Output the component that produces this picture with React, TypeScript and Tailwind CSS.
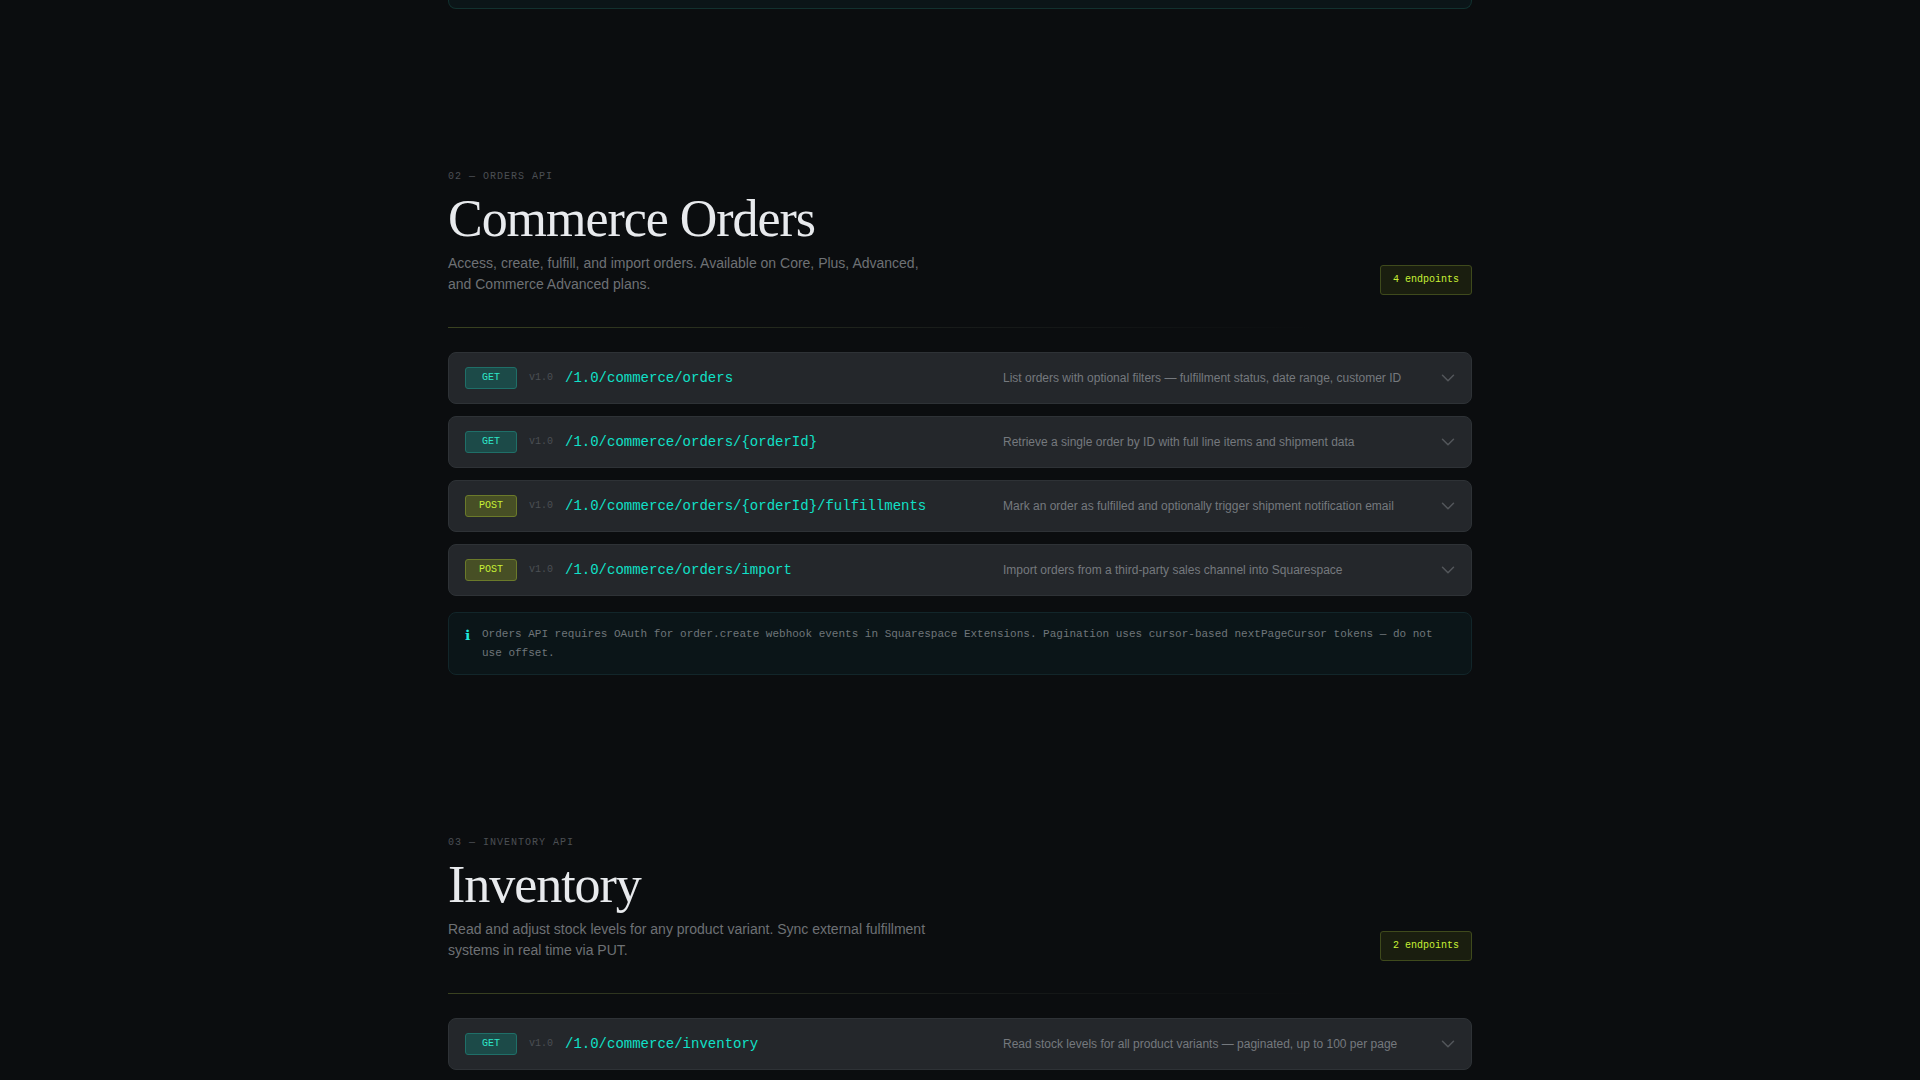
type Endpoint = {
  method: "GET" | "POST";
  path: string;
  desc: string;
};

const orders: Endpoint[] = [
  {
    method: "GET",
    path: "/1.0/commerce/orders",
    desc: "List orders with optional filters — fulfillment status, date range, customer ID",
  },
  {
    method: "GET",
    path: "/1.0/commerce/orders/{orderId}",
    desc: "Retrieve a single order by ID with full line items and shipment data",
  },
  {
    method: "POST",
    path: "/1.0/commerce/orders/{orderId}/fulfillments",
    desc: "Mark an order as fulfilled and optionally trigger shipment notification email",
  },
  {
    method: "POST",
    path: "/1.0/commerce/orders/import",
    desc: "Import orders from a third-party sales channel into Squarespace",
  },
];

const inventory: Endpoint[] = [
  {
    method: "GET",
    path: "/1.0/commerce/inventory",
    desc: "Read stock levels for all product variants — paginated, up to 100 per page",
  },
];

function EndpointRow({ method, path, desc }: Endpoint) {
  return (
    <div className="flex h-[52px] items-center rounded-lg border border-[#2e3236] bg-[#24272b] px-4">
      <span
        className={
          method === "GET"
            ? "flex h-[22px] w-[52px] shrink-0 items-center justify-center rounded-[3px] border border-[#1f6f68] bg-[#1c4a48] pb-[2px] font-['Liberation_Mono',monospace] text-[10px] text-[#2ee6c8]"
            : "flex h-[22px] w-[52px] shrink-0 items-center justify-center rounded-[3px] border border-[#6b7a2a] bg-[#474f25] pb-[2px] font-['Liberation_Mono',monospace] text-[10px] text-[#c8f135]"
        }
      >
        {method}
      </span>
      <span className="ml-3 w-[36px] shrink-0 pb-[2px] font-['Liberation_Mono',monospace] text-[10px] text-[#4b4f54]">
        v1.0
      </span>
      <span className="w-[438px] shrink-0 font-['Liberation_Mono',monospace] text-sm text-[#10e0c8]">
        {path}
      </span>
      <span className="flex-1 font-['Liberation_Sans',sans-serif] text-xs text-[#75797e]">
        {desc}
      </span>
      <svg width="14" height="8" viewBox="0 0 14 8" fill="none" className="shrink-0 text-[#53575b]">
        <path
          d="M1.5 1.25l5.5 5.5 5.5-5.5"
          stroke="currentColor"
          strokeWidth="1.5"
          strokeLinecap="round"
          strokeLinejoin="round"
        />
      </svg>
    </div>
  );
}

function SectionHeader({
  label,
  title,
  lines,
  count,
}: {
  label: string;
  title: string;
  lines: string[];
  count: string;
}) {
  return (
    <div className="relative pb-8">
      <div className="font-['Liberation_Mono',monospace] text-[10px] leading-[15px] tracking-[0.1em] text-[#4b4f54]">
        {label}
      </div>
      <div className="mt-[6px] flex items-end justify-between">
        <div>
          <h2 className="font-['Liberation_Serif',serif] text-[52px] leading-[57px] font-normal tracking-[-0.02em] text-[#e8eaed]">
            {title}
          </h2>
          <p className="mt-[6px] mb-[1px] font-['Liberation_Sans',sans-serif] text-sm leading-[21px] text-[#6e7175]">
            {lines[0]}
            <br />
            {lines[1]}
          </p>
        </div>
        <span className="mb-[1px] flex h-[30px] items-center rounded-[3px] border border-[#3f4a1c] bg-[#1a1e0f] px-3 pb-px font-['Liberation_Mono',monospace] text-[10px] font-normal text-[#c8f135]">
          {count}
        </span>
      </div>
      <div className="absolute right-0 bottom-0 left-0 h-px bg-gradient-to-r from-[#3a4220] via-[#181b1a] to-transparent to-85%" />
    </div>
  );
}

export default function App() {
  return (
    <main className="h-screen overflow-hidden bg-[#0b0d0f]">
      <div className="mx-auto w-[1024px]">
        <div className="h-[9px] rounded-b-lg border-x border-b border-[#12312f] bg-[#0b1518]" />

        <section className="pt-[160px]">
          <SectionHeader
            label="02 — ORDERS API"
            title="Commerce Orders"
            lines={[
              "Access, create, fulfill, and import orders. Available on Core, Plus, Advanced,",
              "and Commerce Advanced plans.",
            ]}
            count="4 endpoints"
          />
          <div className="mt-6 flex flex-col gap-3">
            {orders.map((e) => (
              <EndpointRow key={e.path} {...e} />
            ))}
          </div>
          <div className="mt-4 flex h-[63px] rounded-lg border border-[#12262a] bg-[#0b1518] px-4 pt-3">
            <span className="w-[17px] shrink-0 font-['DejaVu_Sans',sans-serif] text-[14px] leading-[20px] font-bold text-[#1fe8dc]">
              ℹ
            </span>
            <p className="font-['Liberation_Mono',monospace] text-[11px] leading-[19px] text-[#6f757a]">
              Orders API requires OAuth for order.create webhook events in Squarespace Extensions.
              Pagination uses cursor-based nextPageCursor tokens — do not use offset.
            </p>
          </div>
        </section>

        <section className="pt-[160px]">
          <SectionHeader
            label="03 — INVENTORY API"
            title="Inventory"
            lines={[
              "Read and adjust stock levels for any product variant. Sync external fulfillment",
              "systems in real time via PUT.",
            ]}
            count="2 endpoints"
          />
          <div className="mt-6 flex flex-col gap-3">
            {inventory.map((e) => (
              <EndpointRow key={e.path} {...e} />
            ))}
          </div>
        </section>
      </div>
    </main>
  );
}
